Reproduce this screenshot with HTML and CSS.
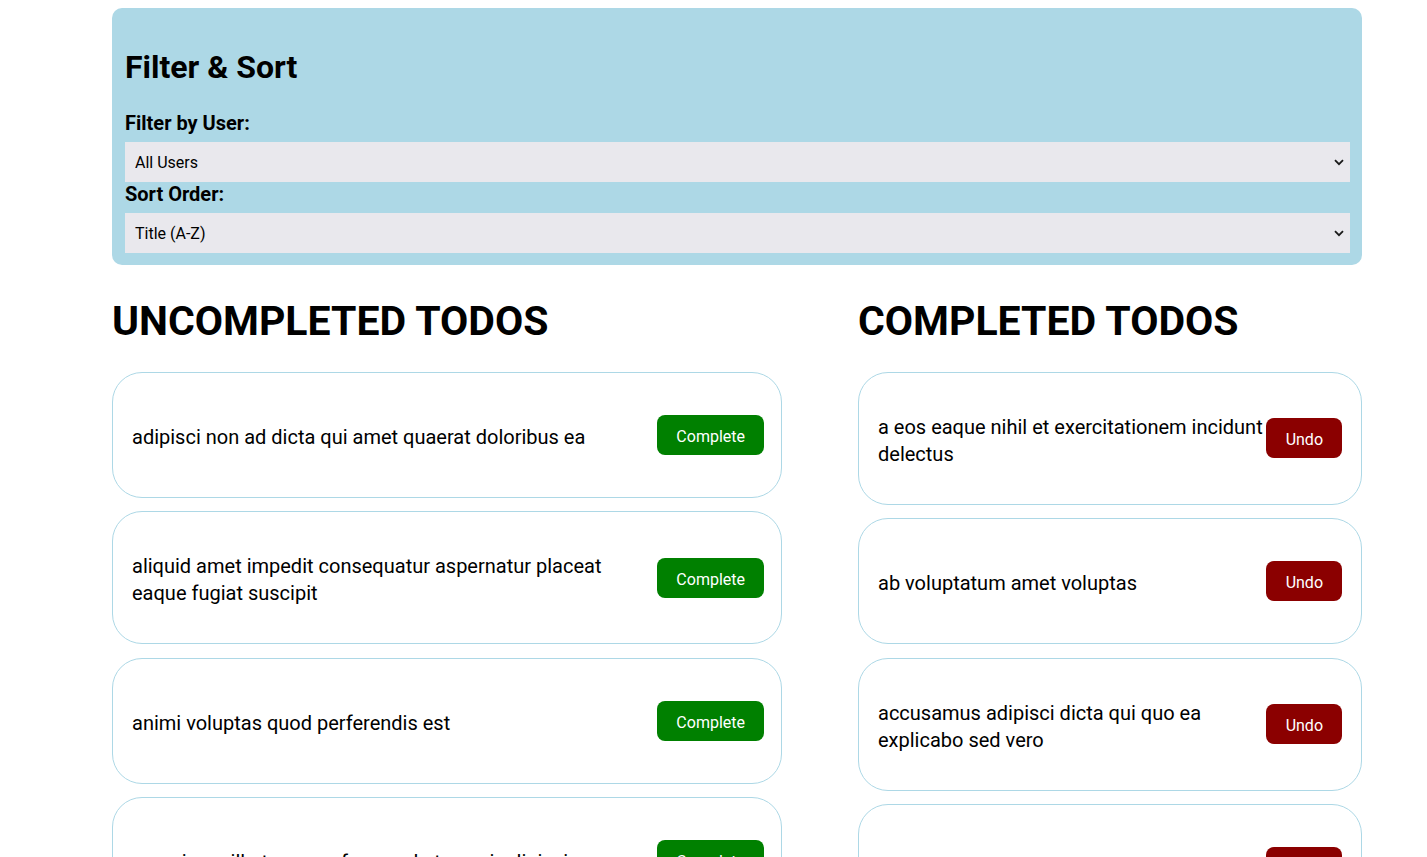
FILE: index.html
```html
<!DOCTYPE html>
<html lang="en">
<head>
<meta charset="utf-8">
<title>Todos</title>
<link rel="stylesheet" href="styles.css">
</head>
<body>
<div class="app">
  <section class="panel">
    <h2 class="panel-title">Filter &amp; Sort</h2>
    <label class="field-label" for="user-filter">Filter by User:</label>
    <div class="select-wrap">
      <select id="user-filter" class="select">
        <option>All Users</option>
      </select>
      <svg class="chevron" width="10" height="7" viewBox="0 0 10 7" aria-hidden="true"><path d="M1 1.2l4 4 4-4" fill="none" stroke="#1a1a1a" stroke-width="1.8"/></svg>
    </div>
    <label class="field-label" for="sort-order">Sort Order:</label>
    <div class="select-wrap">
      <select id="sort-order" class="select">
        <option>Title (A-Z)</option>
      </select>
      <svg class="chevron" width="10" height="7" viewBox="0 0 10 7" aria-hidden="true"><path d="M1 1.2l4 4 4-4" fill="none" stroke="#1a1a1a" stroke-width="1.8"/></svg>
    </div>
  </section>

  <div class="columns">
    <section class="column">
      <h1 class="column-title">UNCOMPLETED TODOS</h1>
      <ul class="todo-list">
        <li class="todo"><p class="todo-text">adipisci non ad dicta qui amet quaerat doloribus ea</p><button class="btn btn-complete">Complete</button></li>
        <li class="todo"><p class="todo-text">aliquid amet impedit consequatur aspernatur placeat eaque fugiat suscipit</p><button class="btn btn-complete">Complete</button></li>
        <li class="todo"><p class="todo-text">animi voluptas quod perferendis est</p><button class="btn btn-complete">Complete</button></li>
        <li class="todo"><p class="todo-text">asperiores illo tempora fuga sed ut quasi adipisci</p><button class="btn btn-complete">Complete</button></li>
      </ul>
    </section>
    <section class="column">
      <h1 class="column-title">COMPLETED TODOS</h1>
      <ul class="todo-list">
        <li class="todo"><p class="todo-text">a eos eaque nihil et exercitationem incidunt delectus</p><button class="btn btn-undo">Undo</button></li>
        <li class="todo"><p class="todo-text">ab voluptatum amet voluptas</p><button class="btn btn-undo">Undo</button></li>
        <li class="todo"><p class="todo-text">accusamus adipisci dicta qui quo ea explicabo sed vero</p><button class="btn btn-undo">Undo</button></li>
        <li class="todo"><p class="todo-text">ad illo quis voluptatem temporibus</p><button class="btn btn-undo">Undo</button></li>
      </ul>
    </section>
  </div>
</div>
</body>
</html>
```

FILE: styles.css
```css
html {
  overflow: hidden;
}

body {
  margin: 0;
  padding: 8px 0 0 112px;
  font-family: Roboto, "Liberation Sans", sans-serif;
  font-size: 20px;
  color: #000;
  background: #fff;
}

.app {
  width: 1250px;
}

.panel {
  background: #add8e6;
  border-radius: 10px;
  padding: 39px 12px 12px 13px;
}

.panel-title {
  margin: 0 0 24px;
  font-size: 32px;
  line-height: 40px;
  font-weight: 700;
}

.field-label {
  display: block;
  font-size: 20px;
  line-height: 25px;
  font-weight: 700;
}

.select-wrap {
  position: relative;
  margin-top: 6px;
}

.select {
  -webkit-appearance: none;
  appearance: none;
  display: block;
  width: 100%;
  height: 40px;
  margin: 0;
  padding: 0 10px;
  border: 0;
  border-radius: 0;
  background: #e9e8ed;
  color: #000;
  font-family: Roboto, "Liberation Sans", sans-serif;
  font-size: 16px;
}

.chevron {
  position: absolute;
  right: 6px;
  top: 17px;
  pointer-events: none;
}

.columns {
  display: grid;
  grid-template-columns: 670px 504px;
  column-gap: 76px;
}

.column-title {
  margin: 30.6px 0 26.4px;
  font-size: 41px;
  line-height: 50px;
  font-weight: 700;
}

.todo-list {
  list-style: none;
  margin: 0;
  padding: 0;
  display: flex;
  flex-direction: column;
  gap: 13.5px;
}

.todo {
  display: flex;
  align-items: center;
  box-sizing: border-box;
  min-height: 126px;
  padding: 38px 19px;
  border: 1px solid #add8e6;
  border-radius: 30px;
}

.todo-text {
  flex: 1;
  margin: 3px 0 -2px;
  line-height: 27px;
}

.btn {
  flex: none;
  height: 40px;
  padding: 3px 19px 0;
  border: 0;
  border-radius: 8px;
  color: #fff;
  font-family: Roboto, "Liberation Sans", sans-serif;
  font-size: 16px;
}

.btn-complete {
  margin-right: -2px;
  background: #008000;
}

.btn-undo {
  padding-left: 20px;
  background: #8b0000;
}
```
